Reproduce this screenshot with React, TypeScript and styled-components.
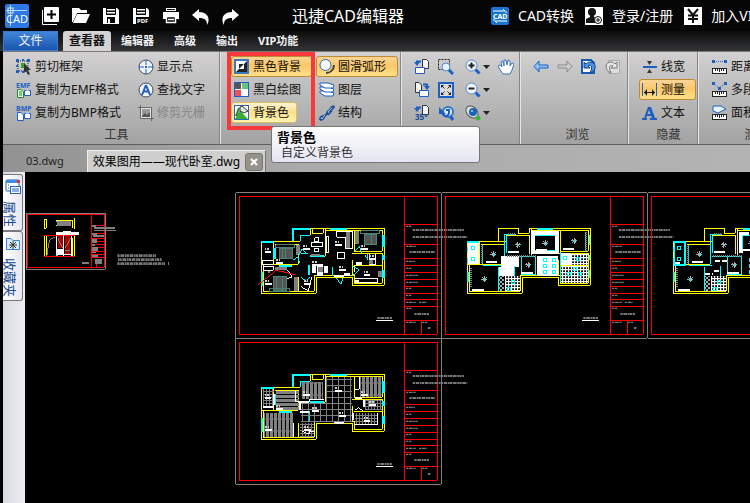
import React from 'react';
import styled, { createGlobalStyle, css } from 'styled-components';

const GlobalStyle = createGlobalStyle`
  * { box-sizing: border-box; }
  body {
    margin: 0;
    background: #000;
    color: #111;
    font: 12px/16px "Noto Sans", "Noto Sans CJK SC", sans-serif;
  }
  button { font: inherit; color: inherit; background: none; border: 0; padding: 0; margin: 0; cursor: pointer; }
  svg { display: block; flex: none; }
  a { color: inherit; text-decoration: none; }
`;

const Window = styled.div`
  display: flex;
  flex-direction: column;
  min-height: 100vh;
  overflow: hidden;
  background: #000;
`;

const TitleBar = styled.header`
  display: flex;
  align-items: center;
  height: 31px;
  padding-left: 5px;
  background: #060606;
  color: #fff;
  white-space: nowrap;
`;

const QuickTools = styled.div`
  display: flex;
  align-items: center;
  gap: 12px;
  margin-left: 13px;
  button { width: 18px; height: 18px; }
`;

const AppTitle = styled.h1`
  margin: 0 87px 0 52px;
  font-size: 16px;
  line-height: 24px;
  font-weight: 400;
`;

const AccountLinks = styled.nav`
  display: flex;
  gap: 11px;
  font-size: 14px;
  line-height: 20px;
  a { display: flex; align-items: center; gap: 9px; }
`;

const MenuBar = styled.nav`
  display: flex;
  height: 20px;
  padding-left: 3px;
  background: linear-gradient(#0c0c0d, #333436);
  color: #f2f2f2;
  font-size: 11px;
  font-weight: 700;
`;

const MenuTab = styled.button<{ $kind?: 'file' | 'active' }>`
  height: 20px;
  padding: 0 10px;
  white-space: nowrap;
  ${p => p.$kind === 'file' && css`
    width: 55px;
    margin-right: 5px;
    font-size: 12px;
    font-weight: 400;
    background: linear-gradient(#3f86d8, #1c55ae);
    border: 1px solid #3b7bd0;
  `}
  ${p => p.$kind === 'active' && css`
    width: 48px;
    padding: 0;
    font-size: 12px;
    color: #111;
    background: #d5d3d3;
    border-radius: 3px 3px 0 0;
  `}
`;

const Ribbon = styled.section`
  position: relative;
  display: flex;
  height: 94px;
  margin-left: 3px;
  border-top: 1px solid #777;
  border-bottom: 1px solid #5f5f5f;
  background: linear-gradient(#d2d0d0, #c0c0c0 35%, #a3a3a3);
`;

const Group = styled.div<{ $width: number; $pad?: number }>`
  display: flex;
  flex-direction: column;
  flex: none;
  width: ${p => p.$width}px;
  padding: 4px 0 0 ${p => p.$pad ?? 9}px;
  border-right: 1px solid #e6e6e6;
  box-shadow: inset -1px 0 #858585;
`;

const Columns = styled.div<{ $gap?: number }>`
  display: flex;
  gap: ${p => p.$gap ?? 0}px;
  height: 71px;
`;

const Column = styled.div<{ $width?: number }>`
  display: flex;
  flex-direction: column;
  align-items: flex-start;
  gap: 2px;
  flex: none;
  ${p => p.$width && css`width: ${p.$width}px;`}
`;

const GroupLabel = styled.div<{ $shift?: number }>`
  text-align: center;
  color: #333;
  white-space: nowrap;
  line-height: 18px;
  padding-right: ${p => p.$shift ?? 6}px;
`;

const ToolButton = styled.button<{ $state?: 'on' | 'hover'; $fill?: boolean }>`
  display: flex;
  align-items: center;
  gap: 3px;
  height: 21px;
  padding: 0 7px 0 2px;
  border: 1px solid transparent;
  border-radius: 3px;
  white-space: nowrap;
  ${p => p.$fill && css`width: 100%;`}
  &:disabled { color: #858585; }
  ${p => p.$state === 'on' && css`
    border-color: #c08a35;
    background: linear-gradient(#fbd595, #fbc869 45%, #ffe08a);
  `}
  ${p => p.$state === 'hover' && css`
    border-color: #e0bd62;
    background: linear-gradient(#fdf3d0, #fbe08c 50%, #fff3b4);
  `}
`;

const IconButton = styled.button`
  display: flex;
  align-items: center;
  gap: 2px;
  height: 21px;
`;

const Callout = styled.div`
  position: absolute;
  left: 224px;
  top: 0;
  width: 88px;
  height: 78px;
  border: 4px solid #f8393a;
  pointer-events: none;
`;

const Tooltip = styled.div`
  position: absolute;
  left: 268px;
  top: 74px;
  z-index: 2;
  width: 209px;
  height: 37px;
  padding: 2px 5px;
  border: 1px solid #767676;
  border-radius: 3px;
  background: linear-gradient(#fff, #e4e5f0);
  strong { display: block; font-size: 13px; line-height: 16px; color: #000; }
  span { display: block; padding-left: 4px; color: #333; }
`;

const DocTabs = styled.div`
  display: flex;
  align-items: flex-end;
  height: 27px;
  margin-left: 3px;
  background: linear-gradient(90deg, #929292, #aaa 40%, #b3b3b3);
  white-space: nowrap;
`;

const DocTab = styled.button<{ $active?: boolean }>`
  display: flex;
  align-items: center;
  height: 22px;
  padding: 0 23px;
  font-size: 11px;
  color: #222;
  ${p => p.$active && css`
    gap: 5px;
    padding: 0 2px 0 5px;
    font-size: 12px;
    color: #000;
    background: #cfcfcf;
    border: 1px solid #f1f1f1;
    border-bottom: 0;
    border-right-color: #777;
  `}
`;

const CloseMark = styled.span`
  display: grid;
  place-items: center;
  width: 18px;
  height: 18px;
  border: 1px solid #77756c;
  border-radius: 3px;
  background: #96948a;
`;

const Workspace = styled.main`
  display: flex;
  flex: 1;
  margin-left: 3px;
`;

const Sidebar = styled.aside`
  flex: none;
  width: 22px;
  padding-top: 2px;
  background: linear-gradient(90deg, #d9dae3, #ededf3);
`;

const SideTab = styled.button<{ $height: number }>`
  display: flex;
  flex-direction: column;
  align-items: flex-end;
  gap: 6px;
  width: 20px;
  height: ${p => p.$height}px;
  padding: 4px 1px 0 0;
  border: 1px solid #77777c;
  border-left: 0;
  border-radius: 0 3px 3px 0;
  background: linear-gradient(90deg, #fff, #e8e8ed);
  color: #174a93;
  span {
    align-self: flex-start;
    writing-mode: vertical-rl;
    text-orientation: sideways;
    font-size: 13px;
    line-height: 14px;
  }
`;

const Canvas = styled.div`
  flex: 1;
  min-width: 0;
  overflow: hidden;
  background: #000;
  svg { width: 100%; height: 100%; }
`;

/* ---------- icons ---------- */

const Svg = ({ children, size = 16, box = 16 }: { children: React.ReactNode; size?: number; box?: number }) => (
  <svg width={size} height={size} viewBox={`0 0 ${box} ${box}`} fill="none" aria-hidden="true">{children}</svg>
);
const B = '#1d5fc4';

const PageRotate = ({ deg, flip }: { deg?: boolean; flip?: boolean }) => (
  <Svg>
    {flip ? (
      <>
        <path d="M1.500 .5H5L7.500 3V10.500H1.500Z" fill="#f4f4f4" stroke="#333" />
        <path d="M5.500 8.500H14.500V14.500H5.500Z" fill="#fff" stroke={B} />
        <path d="M9 2.500H13V5" stroke={B} strokeWidth="2" />
        <path d="M10 4H16L13 8Z" fill={B} />
      </>
    ) : (
      <>
        <path d="M8.500 .5H12.500L14.500 2.500V9.500H8.500Z" fill="#f4f4f4" stroke="#333" />
        {!deg && <path d="M1.500 8.500H10.500V14.500H1.500Z" fill="#fff" stroke={B} />}
        <path d="M7 2.500H3V5" stroke={B} strokeWidth="2" />
        <path d="M0 3H6L3 7Z" fill={B} />
        {deg && <text x="1" y="15" fontSize="8" fontWeight="700" fill="#134a9e">35°</text>}
      </>
    )}
  </Svg>
);

const Lens = ({ mark }: { mark: 'plus' | 'minus' }) => (
  <Svg>
    <path d="M10.500 10.500L14.500 14.500" stroke={B} strokeWidth="3" />
    <circle cx="6.500" cy="6.500" r="5.500" fill="#eef6ff" stroke="#4f86cf" />
    <path d={mark === 'plus' ? 'M3.500 6.500H9.500M6.500 3.500V9.500' : 'M3.500 6.500H9.500'} stroke="#222" strokeWidth="2" />
  </Svg>
);

const CopyFormat = ({ label, color }: { label: string; color: string }) => (
  <Svg>
    <text x="0" y="6" fontSize="7" fontWeight="700" fill={B}>{label}</text>
    <path d="M1.500 7.500H5L7.500 10V15.500H1.500Z" fill="#fff" stroke={color} />
    {color !== B && <path d="M3 9H6V14H3Z" fill="#6bd36b" />}
    <path d="M8.500 8.500H14.500V13.500H8.500Z" fill="#fff" stroke={B} />
    <path d="M10 7H13V9H10Z" fill="#9bc1ee" />
  </Svg>
);

const Ruler = () => (
  <>
    <rect x=".5" y="9.500" width="14" height="5" fill="#fff" stroke="#222" />
    <path d="M3.500 10V12M5.500 10V12M7.500 10V13M9.500 10V12M11.500 10V12" stroke="#222" />
  </>
);

const icons = {
  cutFrame: <Svg><path d="M2 2H12V12H2Z" stroke="#222" strokeDasharray="1 1" /><path d="M0 0H3V3H0ZM11 0H14V3H11ZM0 11H3V14H0ZM6 0H8V2H6ZM0 6H2V8H0ZM6 12H8V14H6Z" fill={B} /><path d="M5 4H9V9H5Z" fill="#3ba42f" /><path d="M8 4L15 11H12L14 15L12 16L10 12L8 14Z" fill="#333" /></Svg>,
  showPoint: <Svg><circle cx="8" cy="8" r="7" fill="#f1f4fa" stroke="#3c4a64" /><path d="M8 1V6M8 10V15M1 8H6M10 8H15" stroke={B} /><path d="M7 7H9V9H7Z" fill={B} /></Svg>,
  findText: <Svg><circle cx="8" cy="8" r="7" fill="#f1f4fa" stroke="#3c4a64" /><path d="M8 3L12 13M8 3L4 13M5.500 9.500H10.500" stroke={B} strokeWidth="2" /></Svg>,
  cropRaster: <Svg><path d="M2.500 0V13.500H16M0 2.500H13.500V16" stroke="#666" /><path d="M3 3H13V13H3Z" fill="#e4e4e4" /><path d="M4 4H12V11H4Z" fill="#999" /><path d="M4 11L7 8L9 10L12 7V12H4Z" fill="#555" /></Svg>,
  blackBg: <Svg><rect x="1" y="1" width="13" height="13" fill="#222" stroke="#3d77bd" strokeWidth="2" /><path d="M2 13V2H13Z" fill="#fff" /><path d="M5 10V5H10Z" fill="#222" /><path d="M5 10H10V5Z" fill="#fff" /></Svg>,
  bwDraw: <Svg><rect x=".5" y=".5" width="14" height="14" fill="#fff" stroke={B} /><path d="M1 1H7V7H1Z" fill="#555" /><path d="M8 1H14V7H8Z" fill="#62c676" /><path d="M1 8H7V14H1Z" fill="#f04c5d" /></Svg>,
  bgColor: <Svg><rect x=".5" y=".5" width="14" height="14" fill="#fff" stroke="#2b66b9" /><path d="M1 14L6 5L10 10L14 14Z" fill="#35ad2f" /><path d="M6 2L8 1L14 6L10 8L6 6Z" fill="#dfe6e8" stroke="#333" /><path d="M5 3L2 11" stroke="#287a25" strokeWidth="2" /></Svg>,
  arc: <Svg><circle cx="6.500" cy="6" r="5.500" fill="#f8fbff" stroke="#2d68b8" /><path d="M15 6C15 11 11 14 7 14" stroke="#444" strokeWidth="2" /></Svg>,
  layers: <Svg>{[11, 7, 3].map(y => <path key={y} d={`M1 ${y - 2}L9 ${y - 2}L15 ${y}L14 ${y + 3}H6L1 ${y}Z`} fill="#fff" stroke={B} />)}</Svg>,
  structure: <Svg><path d="M1 15C0 9 7 13 8 8S15 7 15 1M1 15C7 16 4 9 9 9S8 2 15 1M3 11L5 14M7 8L10 10M10 4L13 7" stroke="#174a9b" strokeWidth="1.500" /><path d="M3 14L6 10M9 7L13 3" stroke="#a9cdf3" /></Svg>,
  zoomArea: <Svg><path d="M.5 .5H11.500V10.500H.5Z" stroke="#222" strokeDasharray="2 1" /><circle cx="8" cy="8" r="4" fill="#e5f3ff" stroke="#4f86cf" /><path d="M11 11L15 15" stroke={B} strokeWidth="3" /></Svg>,
  fit: <Svg><rect x="1" y="1" width="14" height="14" fill="#dcdcdc" stroke={B} strokeWidth="2" /><path d="M3 3H6L3 6ZM13 3V6L10 3ZM3 13V10L6 13ZM13 13H10L13 10Z" fill="#222" /><path d="M4 4L6.500 6.500M12 4L9.500 6.500M4 12L6.500 9.500M12 12L9.500 9.500" stroke="#222" /></Svg>,
  zoomPrev: <Svg><circle cx="10" cy="7" r="5" stroke="#3576c5" strokeWidth="2" fill="#dceeff" /><path d="M1 2V9H8L5 6" fill={B} /><path d="M4 8C6 12 10 12 11 8V5H8" stroke={B} strokeWidth="2" /><path d="M12 11L15 15" stroke={B} strokeWidth="3" /></Svg>,
  orbit: <Svg><ellipse cx="7" cy="7" rx="7" ry="5" transform="rotate(45 7 7)" fill="#ddd" stroke="#555" /><circle cx="8" cy="7" r="4" fill="#1b62ba" /><circle cx="7" cy="6" r="1" fill="#b5dcff" /><circle cx="13" cy="13" r="2.500" fill="#38b637" /></Svg>,
  hand: <Svg><path d="M5 15L1 9L0 7L2 6L4 8L3 3L5 2L6 7L6 1H8L9 6L10 1L12 2L12 7L14 4L16 5L14 11L12 15Z" fill="#fff" stroke="#3975bd" /></Svg>,
  back: <Svg><path d="M1 7.500L6 2V6H15V9H6V13Z" fill="#8ec2f5" stroke={B} /></Svg>,
  forward: <Svg><path d="M15 7.500L10 2V6H1V9H10V13Z" fill="#ccc" stroke="#8b8b8b" /></Svg>,
  undoPage: <Svg><path d="M1 1H10L13 4V14H1Z" fill="#fff" stroke="#155ab5" strokeWidth="2" /><path d="M3 3V9H9L7 7C10 5 12 8 9 14C17 11 15 3 9 3C7 3 6 4 5 5Z" fill="#4a93ea" stroke="#123f86" /></Svg>,
  redoPage: <Svg><path d="M3.500 1.500H14.500V14.500H3.500Z" fill="#ddd" stroke="#aaa" /><path d="M12 3V9H6L8 7C5 5 3 8 6 14C-1 11 0 3 6 3C8 3 9 4 10 5Z" fill="#e6e6e6" stroke="#777" /></Svg>,
  lineWidth: <Svg><path d="M1 7H15V9H1Z" fill={B} /><path d="M5 2H10L7.500 6ZM5 14H10L7.500 10Z" fill="#333" /></Svg>,
  measure: <Svg><path d="M.5 1V14M14.500 1V14" stroke={B} /><path d="M2 10.500H13" stroke="#222" /><path d="M2 10.500L5 7V14ZM13 10.500L10 7V14Z" fill="#222" /></Svg>,
  textA: <Svg><path d="M6 2H9L13 13H15V15H8V13H10L9 11H5L4 13H5V15H0V13H2ZM7 5L5.500 9H8.500Z" fill={B} fillRule="evenodd" /></Svg>,
  distance: <Svg><path d="M0 1H3V4H0ZM12 1H15V4H12Z" fill={B} /><path d="M4 2.500H12" stroke={B} strokeDasharray="1 1" /><Ruler /></Svg>,
  polyline: <Svg><path d="M0 0H3V3H0ZM12 0H15V3H12ZM6 5H9V8H6Z" fill={B} /><path d="M2 2L7 6L13 2" stroke={B} strokeDasharray="1 1" /><Ruler /></Svg>,
  area: <Svg><path d="M1 1H9L14 4L6 8L1 6Z" fill="#e5f3ff" stroke={B} /><Ruler /></Svg>,
};

const Caret = () => <svg width="7" height="4" viewBox="0 0 7 4"><path d="M0 0H7L3.500 4Z" fill="#222" /></svg>;

const Logo = () => (
  <Svg size={24} box={24}>
    <rect width="24" height="24" rx="2" fill="#2b78e6" />
    <path d="M5.500 1V22M1 6.500H22" stroke="#b7d6ff" />
    <rect x="3" y="4" width="5" height="5" stroke="#d5e6ff" />
    <text x="1" y="19" fontSize="11" fill="#fff">CAD</text>
  </Svg>
);

const quick: [string, React.ReactNode][] = [
  ['新建', <Svg size={18} box={18}><path d="M.5 3V17.500H15" stroke="#fff" /><rect x="2" y="0" width="15" height="15" rx="1" fill="#fff" /><path d="M9.500 3V12M5 7.500H14" stroke="#000" strokeWidth="2" /></Svg>],
  ['打开', <Svg size={18} box={18}><path d="M0 1H7L9 3H15V6H5L1 15H0Z" fill="#fff" /><path d="M5 7H18L14 16H1Z" fill="#fff" /></Svg>],
  ['保存', <Svg size={18} box={18}><path d="M1 1H15L17 3V17H1Z" fill="#fff" /><path d="M4 1V8H14V1M5 10H13V16H5Z" fill="#050505" /><path d="M5 2H13V3.500H5ZM5 5H13V6.500H5ZM6 12H8V16H6Z" fill="#fff" /></Svg>],
  ['保存为PDF', <Svg size={18} box={18}><path d="M1 1H15L17 3V17H1Z" fill="#fff" /><path d="M4 1V8H14V1M4 10H18V17H4Z" fill="#050505" /><path d="M5 2H13V3.500H5ZM5 5H13V6.500H5Z" fill="#fff" /><text x="5" y="16" fontSize="6" fontWeight="700" fill="#fff">PDF</text></Svg>],
  ['打印', <Svg size={18} box={18}><path d="M4 1H14V4H4ZM1 5H17V12H14V9H4V12H1Z" fill="#fff" /><path d="M5 2.500H13" stroke="#000" /><path d="M4.500 9.500H13.500V15.500H4.500ZM6 12.500H12" stroke="#fff" strokeWidth="1.500" /></Svg>],
  ['撤销', <Svg size={18} box={18}><path d="M0 8L7 2V5C15 5 19 11 15 18C15 13 13 11 7 11V14Z" fill="#fff" /></Svg>],
  ['重做', <Svg size={18} box={18}><path d="M17 8L10 2V5C2 5 -2 11 2 18C2 13 4 11 10 11V14Z" fill="#fff" /></Svg>],
];

/* ---------- drawing sheets ---------- */

const Y = '#ffff00', C = '#00ffff', R = '#ff0000', G = '#808080', W = '#ffffff';

const Smudge = ({ x, y, w, h = 4 }: { x: number; y: number; w: number; h?: number }) => (
  <path d={`M${x} ${y}H${x + w}`} stroke="#777" strokeWidth={h} strokeDasharray="7 2 11 2 5 1" shapeRendering="auto" />
);

/* A sheet is drawn in units of a third of a pixel. */
const Sheet = ({ x, y, children }: { x: number; y: number; children: React.ReactNode }) => (
  <g transform={`translate(${x} ${y}) scale(.333333)`} fill="none" strokeWidth="3" shapeRendering="crispEdges">
    <path d="M16.500 22.500H634.500V460.500H16.500Z" stroke={G} />
    <path d="M28.500 34.500H622.500V448.500H28.500ZM523.500 34.500V448.500M574.500 406.500V448.500" stroke={R} />
    {[118.5, 178.5, 220.5, 241.5, 262.5, 283.5, 304.5, 325.5, 343.5, 364.5, 406.5].map(v => (
      <path key={v} d={`M523.500 ${v}H622.500`} stroke={R} />
    ))}
    {[[124, 16], [184, 30], [229, 28], [250, 16], [271, 36], [292, 36], [310, 16], [331, 16], [352, 30], [370, 16], [412, 30]].map(([v, w]) => (
      <Smudge key={v} x={528} y={v} w={w} />
    ))}
    <Smudge x={548} y={135} w={154} h={6} />
    <Smudge x={548} y={156} w={164} h={6} />
    <Smudge x={538} y={201} w={77} h={6} />
    <Smudge x={567} y={352} w={24} />
    <Smudge x={553} y={387} w={44} h={6} />
    <Smudge x={576} y={412} w={16} />
    <Smudge x={594} y={429} w={9} h={6} />
    <Smudge x={442} y={399} w={44} h={6} />
    <path d="M438 406.500H489" stroke={W} />
    {children}
  </g>
);

const Walls = ({ ceiling }: { ceiling?: boolean }) => (
  <>
    <path d="M94.500 169.500V325.500H259.500V277.500H367.500V301.500H463.500V130.500H280M211.500 151.500V169.500H94.500M100.500 241.500V319.500H253.500V271.500H373.500V294.500H457.500V241.500M132 240.500V169.500M135 177.500H205V238.500H95M286.500 133V214.500H247M373.500 136V199.500H457.500V136H286M367.500 205.500H457.500V241.500H373M367.500 226V271" stroke={Y} />
    {ceiling ? (
      <>
        <path d="M187.500 169V130.500H247.500V145.500H280.500V130.500M211 151.500H280.500V208" stroke={Y} />
        <path d="M205 238V147.500H241M211 213.500H300M142 241.500H210" stroke={C} />
        <path d="M94 171H130M97 187V202M97 218V236M97 262V290M461 150V181M461 210V225M461 255V280M304 132H350" stroke={C} strokeWidth="5" />
      </>
    ) : (
      <>
        <path d="M241.500 130.500V151.500H211.500M280 130.500H241.500M247.500 133V145.500H280.500V133M207 275V319" stroke={Y} />
        <path d="M188.500 169V132.500H241M94 171H132M211.500 169V152H241M236.500 240V271M307.500 246V272" stroke={C} strokeWidth="5" />
        <path d="M300 132.500H351M461 150V186M461 210V225M461 255V280M97 261V303M134 188V222M148 242.500H185M239 212.500H283" stroke={C} strokeWidth="7" />
      </>
    )}
  </>
);

const Labels = () => (
  <>
    {[[104, 192], [138, 225], [219, 183], [315, 172], [247, 231], [327, 246], [393, 184], [401, 261], [105, 289], [222, 289], [418, 213]].map(([x, y]) => (
      <g key={`${x}-${y}`}>
        <path d={`M${x} ${y}H${x + 14}`} stroke="#ccc" strokeWidth="6" strokeDasharray="5 3" />
        <path d={`M${x} ${y + 8}H${x + 20}`} stroke={W} strokeWidth="6" />
      </g>
    ))}
  </>
);

const FurniturePlan = () => (
  <>
    <path d="M148 190H187V222H148ZM131 274H170V317H131ZM405 148H439V179H405Z" fill="#555" stroke="#4a8373" />
    <path d="M137 180H195V189H137ZM118 311H180V320H118ZM393 138H450V147H393ZM158 188V222M168 188V222M141 274V317M158 274V317M425 148V180" stroke="#4a8373" />
    <path d="M197 180H210V210H197ZM192 276H205V318H192ZM375 137H388V177H375ZM444 258H455V276H444ZM135 246H170V254H135ZM347 142H361V190H347ZM242 208H270V214H242Z" fill={G} />
    <path d="M320 139H367V192H347V157H320ZM322 202H344V220H322ZM244 172H278V185H244ZM254 158H266V170H254ZM253 190H266V200H253ZM102 244H130V256H102ZM289 154H297V202H289ZM375 280H443V294H375M97 228H130V238H97ZM374 240V262M418 207V238H437V207M173 256L187 277L170 280M212 304L235 318L245 276" stroke={W} />
    <path d="M246 244H258V263H246ZM282 244H293V263H282ZM342 264H360V273H342ZM379 231H397V240H379ZM376 285H388V294H376M260 237H280V272H260ZM313 270H342V276H313Z" fill={W} />
    <path d="M264 246H278V261H264ZM348 158H360V165H348ZM113 258H121V264H113ZM417 225H428V237H417Z" fill={G} />
    <path d="M205 212L216 193L233 207H213M190 225L205 215L208 235M212 275L230 290L238 276M316 278L333 296L340 278M376 199L388 184L395 204M370 245L388 255L370 270M404 209L414 225V208" stroke={C} />
    <path d="M85 299L139 256L196 269" stroke={R} />
    <Labels />
  </>
);

const CeilingPlan = ({ variant }: { variant?: boolean }) => (
  <>
    {variant ? (
      <>
        <path d="M98 172H130V240H98Z" stroke={C} strokeWidth="5" />
        <path d="M290 142H320V152H302V205H290Z" fill={W} />
        <path d="M302 152H356V198H302Z" stroke={C} />
        <path d="M219 227H260M216 258H236M100 234H120M190 267H212" stroke={W} strokeWidth="6" strokeDasharray="15 6" />
      </>
    ) : (
      <>
        <path d="M97 173H130V238H97ZM196 214H250V245H238V272H190V245H196ZM302 214H367V272H302ZM286 138H369V207H286ZM374 205H405V241H374Z" fill={W} />
        <path d="M297 150H357V198H297Z" fill="#000" />
        <path d="M297 151H357M297 198H357" stroke={C} />
      </>
    )}
    <rect x="207" y="274" width="45" height="45" fill="url(#mesh)" />
    <path d="M405 207H456V240H405ZM375 243H456V294H375Z" fill="url(#mesh)" />
    <path d="M189 274H204V318H189Z" fill="url(#checks)" />
    <path d="M139 180V238M213 152V205M187 247V318M258 217V270H300V217M373 200V290M450 140V200M237 243V272" stroke={C} />
    <path d="M139 184V238M451 140V200M214 212H300M104 250V305M216 148H240" stroke={G} strokeWidth="6" strokeDasharray="3 3" />
    {[[172, 208], [246, 180], [328, 175], [415, 168], [145, 283], [277, 240]].map(([x, y]) => (
      <g key={x}>
        <path d={`M${x - 9} ${y}H${x + 9}M${x} ${y - 9}V${y + 9}M${x - 6} ${y - 6}L${x + 6} ${y + 6}M${x + 6} ${y - 6}L${x - 6} ${y + 6}`} stroke="#aaa" />
        <path d={`M${x + 3} ${y - 3}V${y + 4}`} stroke={C} />
      </g>
    ))}
    {[[112, 190], [112, 223], [327, 225], [354, 225], [327, 243], [354, 243], [327, 261], [354, 261], [388, 219], [427, 222], [418, 253], [433, 268], [398, 268], [232, 292], [218, 313]].map(([x, y]) => (
      <rect key={`${x}-${y}`} x={x - 4} y={y - 4} width="9" height="9" stroke={C} />
    ))}
    <path d="M150 231H183M216 201H250M300 195H333M381 192H414M108 315H144M255 264H291" stroke={W} strokeWidth="6" />
  </>
);

const FloorPlan = () => (
  <>
    <path d="M288 137H367V272H212V217H288Z" fill="url(#tiles)" />
    <path d="M103 247H190V318H103ZM212 152H280V204H212ZM390 138H457V199H390Z" fill="url(#planksV)" />
    <rect x="137" y="180" width="69" height="58" fill="url(#planksH)" />
    <path d="M98 174H131V226H98ZM210 276H252V319H210ZM375 247H442V280H375ZM405 207H455V238H405Z" fill="url(#smallTiles)" />
    <path d="M133 190V222M210 214V238M210 213H238M313 275H342M370 246V267M376 202H395M403 207V229M211 244H238M132 227H98" stroke={W} strokeWidth="6" />
    <path d="M197 178V212H210M238 214V206H283M190 275V318M375 175H388V137M375 280H443V246M216 300L238 310V302H255M376 236L387 230L398 240" stroke={W} />
    <Labels />
  </>
);

const Drawing = () => (
  <svg role="img" aria-label="住宅平面图">
    <defs>
      <pattern id="mesh" width="9" height="9" patternUnits="userSpaceOnUse"><path d="M0 1.500H9M1.500 0V9" stroke={W} strokeWidth="4" /></pattern>
      <pattern id="checks" width="12" height="12" patternUnits="userSpaceOnUse"><path d="M0 0H6V6H0ZM6 6H12V12H6Z" fill="#aaa" /></pattern>
      <pattern id="tiles" width="18" height="18" patternUnits="userSpaceOnUse"><path d="M0 1.500H18M1.500 0V18" stroke={G} strokeWidth="3" /></pattern>
      <pattern id="smallTiles" width="9" height="9" patternUnits="userSpaceOnUse"><path d="M0 1.500H9M1.500 0V9" stroke={G} strokeWidth="3" /></pattern>
      <pattern id="planksV" width="12" height="36" patternUnits="userSpaceOnUse"><rect width="9" height="36" fill={G} /><path d="M9 12H12" stroke={G} strokeWidth="3" /></pattern>
      <pattern id="planksH" width="36" height="12" patternUnits="userSpaceOnUse"><rect width="36" height="9" fill={G} /></pattern>
    </defs>
    <g transform="translate(-25 -172)">
      <Sheet x={230} y={185}><Walls /><FurniturePlan /></Sheet>
      <Sheet x={436} y={185}><Walls ceiling /><CeilingPlan /></Sheet>
      <Sheet x={642} y={185}><Walls ceiling /><CeilingPlan variant /></Sheet>
      <Sheet x={230} y={331}><Walls /><FloorPlan /></Sheet>
      <g transform="translate(0 165) scale(.333333)" fill="none" strokeWidth="3" shapeRendering="crispEdges">
        <path d="M79.500 145.500H316.500V313.500H79.500Z" stroke={G} />
        <path d="M82.500 148.500H313.500V307.500H82.500ZM274.500 148.500V307.500M291 283V307M276 181.500H313M276 205.500H313M276 220.500H313M276 229.500H313M276 238.500H313M276 247.500H313M276 259.500H313M276 268.500H313M276 277.500H313M132 212H225M132 274H225" stroke={R} />
        <path d="M133.500 163.500H139.500V190H133.500ZM168 166.500H217V190M223.500 159V191M134 213V273M139 213V273M217 220V273M223.500 213V273" stroke={Y} />
        <path d="M171 168H214V182H171ZM276 179H288V185H276ZM282 186H345V191H282ZM282 195H348V198H282ZM276 204H291V211H276ZM279 210H312V216H279ZM276 222H291V234H276ZM276 238H285V244H276ZM276 246H294V257H276ZM276 260H288V264H276ZM276 270H294V276H276ZM285 282H306V297H285ZM246 291H267V297H246Z" fill={G} />
        <path d="M165 216Q145 220 144 250V265L138 274" stroke={G} />
        <path d="M168 202H189V198H213V201H237V210H168ZM171 253H190V270H171Z" fill={W} />
        <path d="M174 213H188V250H174ZM195 213H211V267H195Z" fill="#b00000" />
        <path d="M171 212V273M190 210V273M214 212V273M193 268H215" stroke={W} />
        <path d="M174 220L188 250M195 250L211 220M195 257H211" stroke={G} />
        <path d="M169 168V172M169 180V183M169 272H174" stroke={C} />
        <Smudge x={352} y={272} w={116} h={8} />
        <Smudge x={358} y={284} w={127} h={8} />
        <Smudge x={352} y={296} w={143} h={8} />
        <path d="M355 279V288M505 291V301" stroke={G} />
      </g>
    </g>
  </svg>
);

/* ---------- page ---------- */

type ToolProps = { icon: keyof typeof icons; label: string; state?: 'on' | 'hover'; fill?: boolean; disabled?: boolean };
const Tool = ({ icon, label, state, fill, disabled }: ToolProps) => (
  <ToolButton $state={state} $fill={fill} disabled={disabled}>{icons[icon]}{label}</ToolButton>
);

export default function App() {
  return (
    <Window>
      <GlobalStyle />
      <TitleBar>
        <Logo />
        <QuickTools>{quick.map(([label, icon]) => <button key={label} aria-label={label}>{icon}</button>)}</QuickTools>
        <AppTitle>迅捷CAD编辑器</AppTitle>
        <AccountLinks>
          <a href="#convert"><Svg size={18} box={18}><rect width="18" height="18" rx="2" fill="#1976ce" /><path d="M2 4H14L12 2M16 14H4L6 16M15 4V6M3 12V14" stroke="#fff" /><text x="2" y="12" fontSize="7" fontWeight="700" fill="#fff">CAD</text></Svg>CAD转换</a>
          <a href="#login"><Svg size={18} box={18}><rect width="18" height="18" fill="#fff" /><circle cx="7" cy="5" r="4" fill="#111" /><path d="M5 7H9V10L13 12V16H1V12L5 10Z" fill="#111" /><circle cx="13" cy="13" r="3.500" fill="#fff" stroke="#111" /><path d="M11 13H15M13 11V15" stroke="#111" /></Svg>登录/注册</a>
          <a href="#vip"><Svg size={18} box={18}><rect width="18" height="18" fill="#fff" /><path d="M4 2L9 8L14 2M9 8V16M4 8.500H14M4 12H14" stroke="#111" strokeWidth="2" /></Svg>加入VIP</a>
        </AccountLinks>
      </TitleBar>
      <MenuBar>
        <MenuTab $kind="file">文件</MenuTab>
        <MenuTab $kind="active">查看器</MenuTab>
        {['编辑器', '高级', '输出', 'VIP功能'].map(t => <MenuTab key={t}>{t}</MenuTab>)}
      </MenuBar>
      <Ribbon>
        <Group $width={218} $pad={10}>
          <Columns>
            <Column $width={122}>
              <Tool icon="cutFrame" label="剪切框架" />
              <ToolButton><CopyFormat label="EMF" color="#218b2b" />复制为EMF格式</ToolButton>
              <ToolButton><CopyFormat label="BMP" color={B} />复制为BMP格式</ToolButton>
            </Column>
            <Column>
              <Tool icon="showPoint" label="显示点" />
              <Tool icon="findText" label="查找文字" />
              <Tool icon="cropRaster" label="修剪光栅" disabled />
            </Column>
          </Columns>
          <GroupLabel $shift={0}>工具</GroupLabel>
        </Group>
        <Group $width={181} $pad={10}>
          <Columns $gap={4}>
            <Column $width={81}>
              <Tool icon="blackBg" label="黑色背景" state="on" fill />
              <Tool icon="bwDraw" label="黑白绘图" />
              <Tool icon="bgColor" label="背景色" state="hover" />
            </Column>
            <Column $width={82}>
              <Tool icon="arc" label="圆滑弧形" state="on" fill />
              <Tool icon="layers" label="图层" />
              <Tool icon="structure" label="结构" />
            </Column>
          </Columns>
        </Group>
        <Group $width={119} $pad={12}>
          <Columns $gap={8}>
            <Column>
              <IconButton aria-label="左旋转"><PageRotate /></IconButton>
              <IconButton aria-label="右旋转"><PageRotate flip /></IconButton>
              <IconButton aria-label="旋转35度"><PageRotate deg /></IconButton>
            </Column>
            <Column $width={19}>
              <IconButton aria-label="窗口缩放">{icons.zoomArea}</IconButton>
              <IconButton aria-label="适应窗口">{icons.fit}</IconButton>
              <IconButton aria-label="上一视图">{icons.zoomPrev}</IconButton>
            </Column>
            <Column $width={25}>
              <IconButton aria-label="放大"><Lens mark="plus" /><Caret /></IconButton>
              <IconButton aria-label="缩小"><Lens mark="minus" /><Caret /></IconButton>
              <IconButton aria-label="动态观察">{icons.orbit}<Caret /></IconButton>
            </Column>
            <IconButton aria-label="平移">{icons.hand}</IconButton>
          </Columns>
        </Group>
        <Group $width={108} $pad={12}>
          <Columns $gap={8}>
            <IconButton aria-label="后退">{icons.back}</IconButton>
            <IconButton aria-label="前进">{icons.forward}</IconButton>
            <IconButton aria-label="撤销视图">{icons.undoPage}</IconButton>
            <IconButton aria-label="重做视图">{icons.redoPage}</IconButton>
          </Columns>
          <GroupLabel>浏览</GroupLabel>
        </Group>
        <Group $width={70} $pad={10}>
          <Columns>
            <Column $width={57}>
              <Tool icon="lineWidth" label="线宽" />
              <Tool icon="measure" label="测量" state="on" fill />
              <Tool icon="textA" label="文本" />
            </Column>
          </Columns>
          <GroupLabel $shift={0}>隐藏</GroupLabel>
        </Group>
        <Group $width={130} $pad={10}>
          <Columns>
            <Column>
              <Tool icon="distance" label="距离" />
              <Tool icon="polyline" label="多段线长度" />
              <Tool icon="area" label="面积" />
            </Column>
          </Columns>
          <GroupLabel $shift={24}>测量</GroupLabel>
        </Group>
        <Callout />
        <Tooltip role="tooltip"><strong>背景色</strong><span>自定义背景色</span></Tooltip>
      </Ribbon>
      <DocTabs>
        <DocTab>03.dwg</DocTab>
        <DocTab $active>效果图用——现代卧室.dwg<CloseMark><svg width="8" height="8" viewBox="0 0 8 8"><path d="M1 1L7 7M7 1L1 7" stroke="#fff" strokeWidth="2" /></svg></CloseMark></DocTab>
      </DocTabs>
      <Workspace>
        <Sidebar>
          <SideTab $height={57}><Svg><rect x="1" y="1" width="13" height="11" rx="1" fill="#fff" stroke={B} /><path d="M1 1H14V4H1Z" fill="#3d8ce8" /><path d="M12 1H15V4H12Z" fill="#dd3333" /><rect x="5.500" y="7.500" width="10" height="7" fill="#fff" stroke={B} /><path d="M7 10H14M7 12H14M3 6H4M3 9H4" stroke={B} /></Svg><span>属性</span></SideTab>
          <SideTab $height={70}><Svg><path d="M1.500 2.500H6L8 4.500H14.500V13.500H1.500Z" fill="#dbebff" stroke="#3580d8" /><path d="M8 5V13M4 9H12M5 6L11 12M11 6L5 12" stroke="#333" /></Svg><span>收藏夹</span></SideTab>
        </Sidebar>
        <Canvas><Drawing /></Canvas>
      </Workspace>
    </Window>
  );
}
